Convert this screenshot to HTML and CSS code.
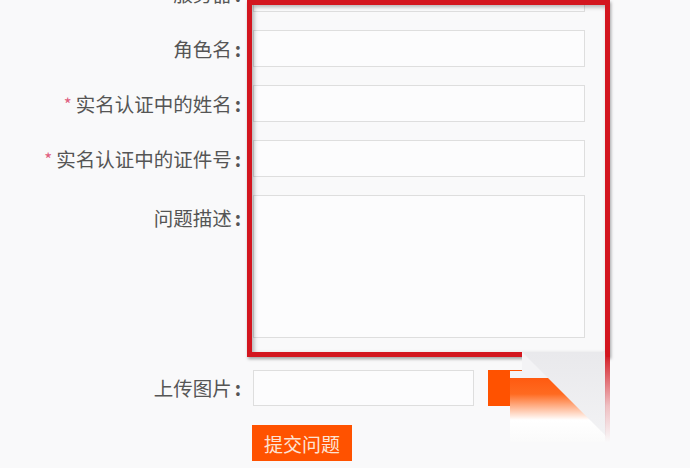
FILE: index.html
```html
<!DOCTYPE html>
<html lang="zh-CN">

<head>
    <meta charset="UTF-8">
    <meta name="viewport" content="width=device-width, initial-scale=1.0">
    <title>提交问题</title>
    <link rel="stylesheet" href="styles.css">
</head>

<body>

    <div class="page">
        <form class="form">
            <div class="row">
                <label class="label">服务器<span class="colon">:</span></label>
                <input type="text" class="field">
            </div>
            <div class="row">
                <label class="label">角色名<span class="colon">:</span></label>
                <input type="text" class="field">
            </div>
            <div class="row">
                <label class="label"><span class="req">*</span>实名认证中的姓名<span class="colon">:</span></label>
                <input type="text" class="field">
            </div>
            <div class="row">
                <label class="label"><span class="req">*</span>实名认证中的证件号<span class="colon">:</span></label>
                <input type="text" class="field">
            </div>
            <div class="row row-area">
                <label class="label">问题描述<span class="colon">:</span></label>
                <textarea class="area"></textarea>
            </div>
            <div class="row row-upload">
                <label class="label">上传图片<span class="colon">:</span></label>
                <input type="text" class="field field-file">
                <button type="button" class="pick">浏览</button>
            </div>
            <div class="row row-submit">
                <span class="label"></span>
                <button type="button" class="submit">提交问题</button>
            </div>
        </form>

        <!-- red highlight drawn over the screenshot -->
        <div class="highlight"></div>

        <!-- folded corner artefact -->
        <div class="smear"></div>
        <div class="fold"></div>
        <div class="edge"></div>
    </div>

</body>

</html>
```

FILE: styles.css
```css
body {
    margin: 0;
    background-color: #f9f9fa;
    font-family: "Noto Sans CJK SC", "Liberation Sans", sans-serif;
    color: #555;
}

.page {
    position: relative;
    width: 690px;
    height: 468px;
    overflow: hidden;
}

.form {
    margin-top: -25px;
}

.row {
    display: flex;
    align-items: center;
    margin-bottom: 18px;
}

.label {
    width: 243px;
    flex-shrink: 0;
    text-align: right;
    font-size: 19.5px;
    line-height: 24px;
    white-space: nowrap;
    padding-right: 2px;
    box-sizing: border-box;
}

.colon {
    margin-left: 3px;
    font-weight: bold;
}

.req {
    color: #e0607f;
    font-size: 17px;
    margin-right: 4px;
    vertical-align: 1px;
}

.field,
.area {
    box-sizing: border-box;
    width: 332px;
    height: 37px;
    margin: 0 0 0 10px;
    border: 1px solid #dedede;
    background-color: #fcfcfd;
    font-size: 16px;
    padding: 4px 8px;
    resize: none;
    outline: none;
}

.row-area {
    align-items: flex-start;
    margin-bottom: 32px;
}

.row-area .label {
    padding-top: 11px;
}

.area {
    height: 143px;
}

.row-upload {
    margin-bottom: 19px;
}

.field-file {
    width: 221px;
    height: 36px;
}

.pick {
    width: 60px;
    height: 36px;
    margin-left: 14px;
    border: none;
    background-color: #ff5200;
    color: #ff5200;
    font-size: 16px;
}

.submit {
    width: 100px;
    height: 36px;
    margin-left: 9px;
    border: none;
    background-color: #ff5200;
    color: #fde3d4;
    font-family: "Noto Sans CJK SC", sans-serif;
    font-size: 19px;
    padding: 0;
}

.highlight {
    position: absolute;
    left: 247px;
    top: 0;
    width: 363px;
    height: 357px;
    box-sizing: border-box;
    border: 5px solid #d3161f;
    box-shadow: 1px 2px 3px rgba(0, 0, 0, 0.35), inset 2px 2px 4px rgba(0, 0, 0, 0.3);
}

.smear {
    position: absolute;
    left: 510px;
    top: 352px;
    width: 95px;
    height: 90px;
    clip-path: polygon(12px 0, 100% 0, 100% 100%, 0 100%, 0 19px, 12px 19px);
    background: linear-gradient(to bottom, #f3f3f5 0, #f3f3f5 26px, #ff5a10 26px, #ff6a20 42px, #ffffff 68px, #fafafa 100%);
}

.fold {
    position: absolute;
    left: 522px;
    top: 352px;
    width: 84px;
    height: 84px;
    clip-path: polygon(0 0, 100% 0, 100% 100%);
    background: linear-gradient(to bottom, #e9e9ec, #f2f2f4);
}

.edge {
    position: absolute;
    left: 605px;
    top: 352px;
    width: 5px;
    height: 90px;
    background: linear-gradient(to bottom, #d3161f, rgba(211, 22, 31, 0.25) 60%, rgba(211, 22, 31, 0));
}
```
